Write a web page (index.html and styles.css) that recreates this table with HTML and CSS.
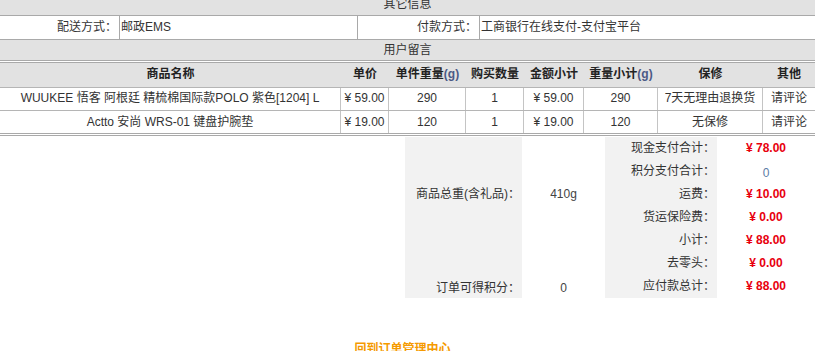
FILE: index.html
```html
<!DOCTYPE html>
<html lang="zh">
<head>
<meta charset="utf-8">
<title>订单详情</title>
<link rel="stylesheet" href="styles.css">
</head>
<body>
<div class="page">
  <div class="info">
    <div class="sec sec-top">其它信息</div>
    <div class="info-row">
      <div class="lbl c-a">配送方式：</div>
      <div class="val c-b">邮政EMS</div>
      <div class="lbl c-c">付款方式：</div>
      <div class="val c-d">工商银行在线支付-支付宝平台</div>
    </div>
    <div class="sec sec-msg">用户留言</div>
  </div>

  <div class="goods">
    <div class="g-row g-head">
      <div class="g-cell">商品名称</div>
      <div class="g-cell">单价</div>
      <div class="g-cell">单件重量<span class="unit">(g)</span></div>
      <div class="g-cell">购买数量</div>
      <div class="g-cell">金额小计</div>
      <div class="g-cell">重量小计<span class="unit">(g)</span></div>
      <div class="g-cell">保修</div>
      <div class="g-cell">其他</div>
    </div>
    <div class="g-row g-data g-first">
      <div class="g-cell">WUUKEE 悟客 阿根廷 精梳棉国际款POLO 紫色[1204] L</div>
      <div class="g-cell">¥ 59.00</div>
      <div class="g-cell">290</div>
      <div class="g-cell">1</div>
      <div class="g-cell">¥ 59.00</div>
      <div class="g-cell">290</div>
      <div class="g-cell">7天无理由退换货</div>
      <div class="g-cell">请评论</div>
    </div>
    <div class="g-row g-data g-second">
      <div class="g-cell">Actto 安尚 WRS-01 键盘护腕垫</div>
      <div class="g-cell">¥ 19.00</div>
      <div class="g-cell">120</div>
      <div class="g-cell">1</div>
      <div class="g-cell">¥ 19.00</div>
      <div class="g-cell">120</div>
      <div class="g-cell">无保修</div>
      <div class="g-cell">请评论</div>
    </div>
  </div>

  <div class="summary">
    <div class="s-blank"></div>
    <div class="s-lbl s-weight">商品总重(含礼品)：</div>
    <div class="s-val s-weight-v">410g</div>
    <div class="s-lbl s-r r1">现金支付合计：</div>
    <div class="s-money r1">¥ 78.00</div>
    <div class="s-lbl s-r r2">积分支付合计：</div>
    <div class="s-plain r2">0</div>
    <div class="s-lbl s-r r3">运费：</div>
    <div class="s-money r3">¥ 10.00</div>
    <div class="s-lbl s-r r4">货运保险费：</div>
    <div class="s-money r4">¥ 0.00</div>
    <div class="s-lbl s-r r5">小计：</div>
    <div class="s-money r5">¥ 88.00</div>
    <div class="s-lbl s-l6"></div>
    <div class="s-val s-v6"></div>
    <div class="s-lbl s-r r6">去零头：</div>
    <div class="s-money r6">¥ 0.00</div>
    <div class="s-lbl s-l7">订单可得积分：</div>
    <div class="s-val s-v7">0</div>
    <div class="s-lbl s-r r7">应付款总计：</div>
    <div class="s-money r7">¥ 88.00</div>
  </div>

  <div class="back"><a class="back-link" href="#">回到订单管理中心</a></div>
</div>
</body>
</html>
```

FILE: styles.css
```css
html, body {
  margin: 0;
  padding: 0;
  background: #ffffff;
}
body {
  font-family: "Liberation Sans", "Noto Sans CJK SC", sans-serif;
  font-size: 12px;
  color: #333333;
  overflow: hidden;
}
.page {
  width: 815px;
}

/* info block */
.info {
  margin-top: -7px;
}
.sec {
  background: #e2e2e2;
  text-align: center;
  border-bottom: 1px solid #a9a9a9;
}
.sec-top {
  height: 22px;
  line-height: 22px;
}
.sec-msg {
  height: 20px;
  line-height: 20px;
}
.info-row {
  display: flex;
  height: 23px;
  line-height: 23px;
  border-bottom: 1px solid #a9a9a9;
  background: #ffffff;
}
.info-row > div {
  box-sizing: border-box;
  height: 23px;
}
.lbl {
  text-align: right;
  padding-right: 2px;
}
.val {
  text-align: left;
  padding-left: 1px;
}
.c-a { width: 120px; border-right: 1px solid #a9a9a9; }
.c-b { width: 238px; border-right: 1px solid #a9a9a9; }
.c-c { width: 122px; border-right: 1px solid #a9a9a9; }
.c-d { flex: 1; }

/* goods table */
.goods {
  margin-top: 1px;
  border-top: 1px solid #a9a9a9;
  border-bottom: 1px solid #a9a9a9;
  padding-bottom: 1px;
}
.goods::after {
  content: "";
  display: block;
  border-bottom: 1px solid #a9a9a9;
}
.g-row {
  display: grid;
  grid-template-columns: 341px 48px 77px 58px 60px 74px 105px 52px;
  border-bottom: 1px solid #b5b5b5;
}
.g-row:last-child {
  border-bottom: none;
}
.g-cell {
  box-sizing: border-box;
  text-align: center;
  white-space: nowrap;
  overflow: hidden;
}
.g-head {
  background: #e2e2e2;
  height: 24px;
  line-height: 23px;
  font-weight: bold;
  color: #222222;
}
.unit {
  color: #4b5a86;
}
.g-data .g-cell {
  border-right: 1px solid #c4c4c4;
}
.g-data .g-cell:last-child {
  border-right: none;
}
.g-first {
  height: 22px;
  line-height: 21px;
}
.g-second {
  height: 22px;
  line-height: 23px;
}

/* summary */
.summary {
  display: grid;
  grid-template-columns: 405px 117px 83px 112px 98px;
  grid-template-rows: repeat(7, 23px);
  margin-top: 1px;
}
.s-blank {
  grid-column: 1;
  grid-row: 1 / 8;
}
.s-lbl {
  background: #f2f2f2;
  text-align: right;
  padding-right: 2px;
  line-height: 23px;
}
.s-val {
  text-align: center;
  line-height: 23px;
  color: #444444;
}
.s-weight {
  grid-column: 2;
  grid-row: 1 / 6;
  display: flex;
  align-items: center;
  justify-content: flex-end;
}
.s-weight-v {
  grid-column: 3;
  grid-row: 1 / 6;
  display: flex;
  align-items: center;
  justify-content: center;
}
.s-l6 { grid-column: 2; grid-row: 6; }
.s-v6 { grid-column: 3; grid-row: 6; }
.s-l7 { grid-column: 2; grid-row: 7; padding-top: 2px; }
.s-v7 { grid-column: 3; grid-row: 7; padding-top: 2px; }
.s-r { grid-column: 4; }
.s-money, .s-plain {
  grid-column: 5;
  text-align: center;
  line-height: 23px;
}
.s-money {
  color: #e8000e;
  font-weight: bold;
}
.s-plain {
  color: #5b7ba6;
  padding-top: 2px;
}
.r1 { grid-row: 1; }
.r2 { grid-row: 2; }
.r3 { grid-row: 3; }
.r4 { grid-row: 4; }
.r5 { grid-row: 5; }
.r6 { grid-row: 6; }
.r7 { grid-row: 7; }

/* back link */
.back {
  text-align: center;
  padding-top: 44px;
  padding-right: 10px;
  line-height: 14px;
}
.back-link {
  color: #f59a00;
  font-weight: bold;
  text-decoration: none;
}
```
